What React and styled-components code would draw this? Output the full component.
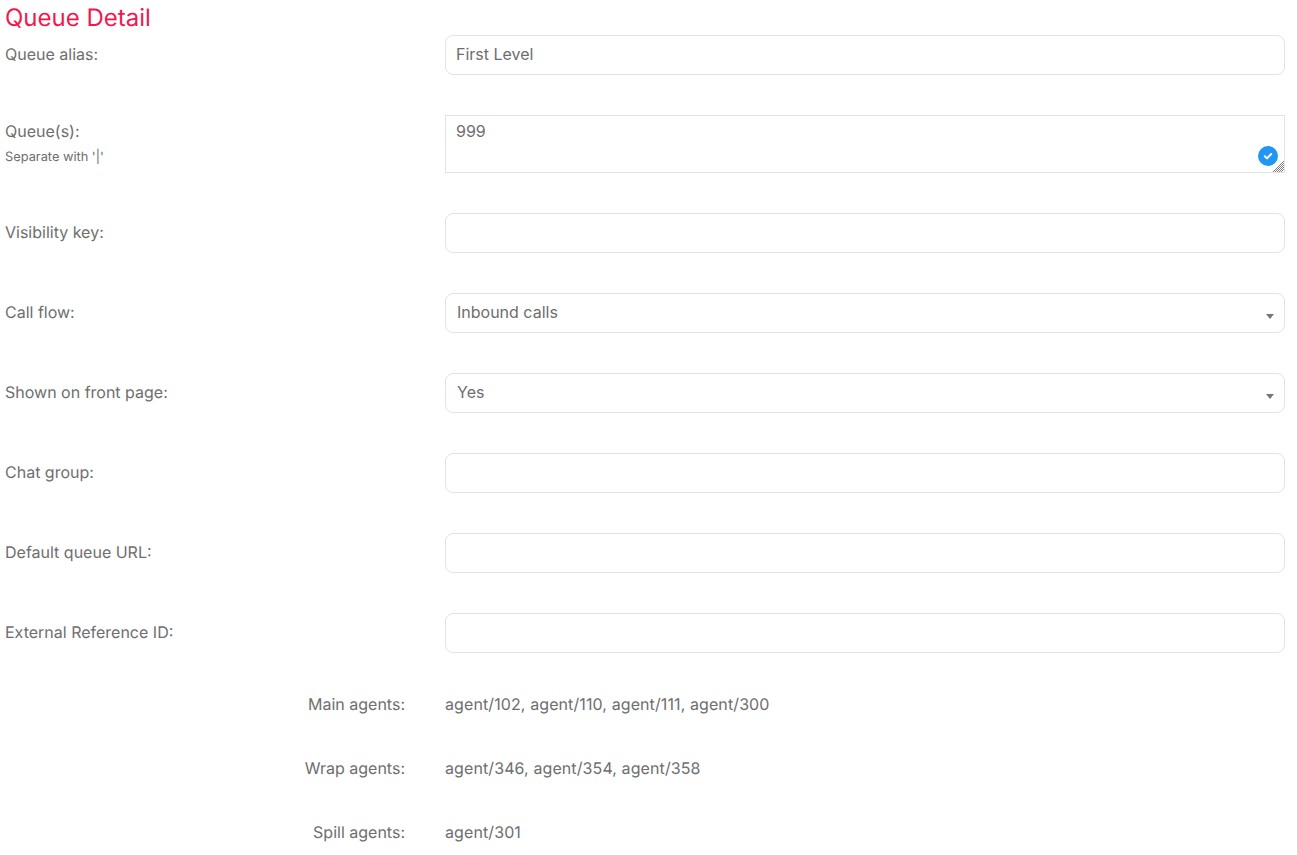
import React from 'react';
import styled, { createGlobalStyle } from 'styled-components';

const GlobalStyle = createGlobalStyle`
  html, body {
    margin: 0;
    padding: 0;
    background: #fff;
    overflow: hidden;
  }
  body {
    font-family: Inter, "Liberation Sans", sans-serif;
    font-size: 16px;
    color: #6e6e6e;
    text-rendering: geometricPrecision;
  }
`;

const Page = styled.div`
  padding: 0 12px 0 5px;
`;

const Heading = styled.h1`
  margin: 0;
  height: 35px;
  font-size: 24px;
  font-weight: 400;
  line-height: 36px;
  color: #f2184f;
`;

const Row = styled.div`
  display: grid;
  grid-template-columns: 440px 840px;
  margin-bottom: 40px;
`;

const Label = styled.label`
  display: block;
  padding-top: ${(p) => p.$top || 9}px;
  font-size: 16px;
  line-height: 20px;
`;

const Hint = styled.small`
  display: block;
  margin-top: 8px;
  font-size: 12.8px;
  line-height: 18px;
`;

const Input = styled.input`
  box-sizing: border-box;
  display: block;
  width: 100%;
  height: 40px;
  padding: 0 10px 2px;
  border: 1px solid #e3e3e3;
  border-radius: 8px;
  background: #fff;
  font: inherit;
  color: #6e6e6e;
  outline: none;
`;

const AreaWrap = styled.div`
  position: relative;
  height: 58px;
`;

const Area = styled.textarea`
  box-sizing: border-box;
  display: block;
  width: 100%;
  height: 58px;
  padding: 5px 10px;
  border: 1px solid #e3e3e3;
  border-radius: 0;
  background: #fff;
  font: inherit;
  line-height: 20px;
  color: #6e6e6e;
  outline: none;
  resize: none;
`;

const CheckBadge = styled.span`
  position: absolute;
  right: 7px;
  bottom: 7px;
  display: flex;
  align-items: center;
  justify-content: center;
  width: 20px;
  height: 20px;
  border-radius: 50%;
  background: #2196f3;
  pointer-events: none;
`;

const Grip = styled.svg`
  position: absolute;
  right: 1px;
  bottom: 1px;
  pointer-events: none;
`;

const SelectWrap = styled.div`
  position: relative;
  height: 40px;
`;

const Select = styled.select`
  box-sizing: border-box;
  display: block;
  width: 100%;
  height: 40px;
  padding: 0 11px 2px;
  border: 1px solid #e3e3e3;
  border-radius: 8px;
  background: #fff;
  font: inherit;
  color: #6e6e6e;
  outline: none;
  appearance: none;
`;

const Caret = styled.span`
  position: absolute;
  right: 11px;
  top: 21px;
  width: 0;
  height: 0;
  border-left: 4px solid transparent;
  border-right: 4px solid transparent;
  border-top: 5px solid #777;
  pointer-events: none;
`;

const AgentList = styled.div`
  margin-top: -1px;
`;

const AgentRow = styled.div`
  display: grid;
  grid-template-columns: 400px 1fr;
  column-gap: 40px;
  height: 64px;
  font-size: 16px;
  line-height: 24px;
`;

const AgentLabel = styled.div`
  text-align: right;
`;

const AgentValue = styled.div`
  letter-spacing: 0.1px;
`;

const agents = [
  ['Main agents:', 'agent/102, agent/110, agent/111, agent/300'],
  ['Wrap agents:', 'agent/346, agent/354, agent/358'],
  ['Spill agents:', 'agent/301'],
];

const TextRow = ({ label, value = '' }) => (
  <Row>
    <Label>{label}</Label>
    <Input defaultValue={value} />
  </Row>
);

const SelectRow = ({ label, value }) => (
  <Row>
    <Label>{label}</Label>
    <SelectWrap>
      <Select defaultValue={value}>
        <option>{value}</option>
      </Select>
      <Caret />
    </SelectWrap>
  </Row>
);

export default function App() {
  return (
    <Page>
      <GlobalStyle />
      <Heading>Queue Detail</Heading>
      <TextRow label="Queue alias:" value="First Level" />
      <Row>
        <Label $top={6}>
          Queue(s):
          <Hint>Separate with '|'</Hint>
        </Label>
        <AreaWrap>
          <Area defaultValue="999" />
          <CheckBadge>
            <svg width="12" height="12" viewBox="0 0 12 12" fill="none">
              <path d="M2.8 6.3 5 8.4 9.2 4" stroke="#fff" strokeWidth="2" strokeLinecap="round" strokeLinejoin="round" />
            </svg>
          </CheckBadge>
          <Grip width="11" height="11" viewBox="0 0 11 11" fill="none" stroke="#808080" strokeWidth="1">
            <path d="M0 11 11 0M2 11 11 2M4 11 11 4M6 11 11 6M8 11 11 8" />
          </Grip>
        </AreaWrap>
      </Row>
      <TextRow label="Visibility key:" />
      <SelectRow label="Call flow:" value="Inbound calls" />
      <SelectRow label="Shown on front page:" value="Yes" />
      <TextRow label="Chat group:" />
      <TextRow label="Default queue URL:" />
      <TextRow label="External Reference ID:" />
      <AgentList>
        {agents.map(([label, list]) => (
          <AgentRow key={label}>
            <AgentLabel>{label}</AgentLabel>
            <AgentValue>{list}</AgentValue>
          </AgentRow>
        ))}
      </AgentList>
    </Page>
  );
}
